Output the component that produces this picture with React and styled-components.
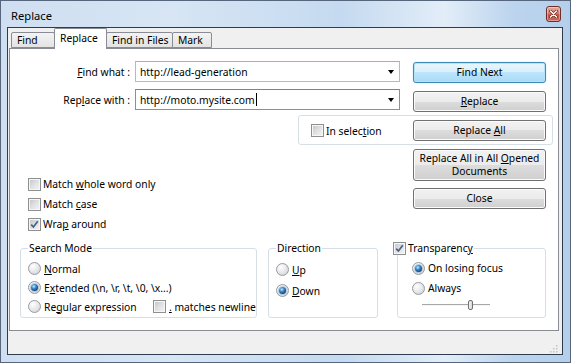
import React from 'react';
import styled, { createGlobalStyle, css } from 'styled-components';

const Global = createGlobalStyle`
  html, body { margin: 0; padding: 0; }
  body {
    width: 571px; height: 363px; overflow: hidden;
    font-family: "Noto Sans", "Open Sans", sans-serif;
    font-size: 10.3px; color: #000;
  }
  * { box-sizing: border-box; }
`;

const Window = styled.div`
  width: 571px; height: 363px;
  display: flex; flex-direction: column;
  border: 1px solid #56677d;
  background: linear-gradient(90deg, #cfdff1 0%, #d7e5f4 30%, #c5daf0 60%, #e2edf8 78%, #bcd4ee 90%, #b5cfeb 100%);
  padding: 0 7px 7px 6px;
`;

const TitleBar = styled.div`
  height: 26px; flex: none;
  display: flex; align-items: center; justify-content: space-between;
  padding: 2px 2px 0 4px;
`;

const Title = styled.span`
  font-size: 11.2px;
`;

const CloseBtn = styled.div`
  width: 15px; height: 16px; margin-top: -2px;
  border: 1px solid #6d3029; border-radius: 3px;
  background: linear-gradient(#e6aaa2 0%, #d27f74 45%, #c15444 55%, #c8685a 100%);
  box-shadow: inset 0 0 0 1px rgba(255,255,255,0.35);
  display: flex; align-items: center; justify-content: center;
`;

const Client = styled.div`
  flex: 1; display: flex; flex-direction: column;
  border: 1px solid #2f3c4d;
  background: #f0f0f0;
  padding: 0 3px 0 1px;
`;

const TabsRow = styled.div`
  height: 20px; flex: none;
  display: flex; align-items: flex-end;
  padding-left: 1px;
  position: relative; z-index: 1;
`;

const Tab = styled.div`
  width: ${p => p.$w}px;
  margin-left: -1px;
  height: ${p => (p.$active ? 21 : 16)}px;
  margin-bottom: ${p => (p.$active ? -1 : 0)}px;
  border: 1px solid #898c95;
  border-bottom: ${p => (p.$active ? 'none' : '1px solid #898c95')};
  border-radius: 2px 2px 0 0;
  background: ${p => (p.$active ? '#fff' : 'linear-gradient(#f3f3f3, #e3e3e3)')};
  padding: ${p => (p.$active ? '0 0 3px 5px' : '0 0 0 5px')};
  display: flex; align-items: center;
  white-space: nowrap;
  position: relative; z-index: ${p => (p.$active ? 2 : 0)};
  &:first-child { margin-left: 1px; }
`;

const Panel = styled.div`
  height: 283px; flex: none;
  border: 1px solid #898c95;
  background: #fff;
  padding: 12px 12px 0 0;
  display: flex; flex-direction: column;
`;

const FieldRow = styled.div`
  height: ${p => p.$h}px; flex: none;
  display: flex; align-items: flex-start;
`;

const Label = styled.label`
  width: 125px; height: 21px; flex: none;
  display: flex; align-items: center; justify-content: flex-end;
  padding-right: 5px;
  white-space: nowrap;
`;

const Combo = styled.div`
  width: 265px; height: 21px; flex: none;
  border: 1px solid ${p => (p.$focus ? '#8a9099' : '#b7bac1')};
  border-top-color: ${p => (p.$focus ? '#7d838c' : '#abadb3')};
  background: #fff;
  display: flex; align-items: center;
  padding: 0 5px 0 4px;
`;

const ComboText = styled.span`
  flex: 1; display: flex; align-items: center; white-space: pre;
`;

const Caret = styled.span`
  width: 1px; height: 13px; background: #000; margin-left: 1px;
`;

const Arrow = styled.span`
  width: 0; height: 0;
  border-left: 3.5px solid transparent;
  border-right: 3.5px solid transparent;
  border-top: 4px solid #000;
`;

const Button = styled.div`
  width: 133px; height: ${p => p.$h || 21}px; flex: none;
  margin-top: ${p => p.$mt || 0}px;
  margin-left: ${p => (p.$auto ? 'auto' : '0')};
  border: 1px solid #707070; border-radius: 3px;
  background: linear-gradient(#f2f2f2 0%, #ebebeb 50%, #dddddd 50%, #cfcfcf 100%);
  box-shadow: inset 0 0 0 1px #fbfbfb;
  display: flex; align-items: center; justify-content: center;
  text-align: center; line-height: 13px;
  ${p => p.$default && css`
    border-color: #3c8cb7;
    background: linear-gradient(#e9f6fd 0%, #d8effc 50%, #bde5fc 50%, #a9daf5 100%);
    box-shadow: inset 0 0 0 1px #b5e3f8, 0 0 1px #5fc2ec;
  `}
`;

const BtnText = styled.span`
  display: block;
`;

const SelectionRow = styled.div`
  display: flex; justify-content: flex-end;
  margin-right: -7px;
`;

const SelectionBox = styled.div`
  width: 255px; height: 30px;
  border: 1px solid #d5dfe5; border-radius: 3px;
  padding: 4px 6px 3px 12px;
  display: flex; align-items: center; justify-content: space-between;
`;

const Middle = styled.div`
  margin-top: 4px; height: 85px; flex: none;
  display: flex; padding-left: 18px;
`;

const CheckList = styled.div`
  margin-top: 25px;
  display: flex; flex-direction: column;
`;

const ButtonCol = styled.div`
  margin-left: auto;
  display: flex; flex-direction: column; gap: 7px;
`;

const CheckRow = styled.div`
  display: flex; align-items: center; gap: 2px;
  height: ${p => p.$h || 20}px;
  white-space: pre;
`;

const Box = styled.span`
  width: 13px; height: 13px; flex: none;
  border: 1px solid #8e8f8f;
  background: linear-gradient(135deg, #bfc3c9 0%, #e2e3e5 55%, #f4f4f4 100%);
  box-shadow: inset 0 0 0 1px #f6f6f6;
  display: flex; align-items: center; justify-content: center;
`;

const RadioCircle = styled.span`
  width: 13px; height: 13px; flex: none;
  border-radius: 50%;
  border: 1px solid #979aa0;
  background: radial-gradient(circle at 35% 30%, #ffffff 0%, #e9eaec 45%, #c9ccd1 100%);
  display: flex; align-items: center; justify-content: center;
`;

const RadioDot = styled.span`
  width: 7px; height: 7px; border-radius: 50%;
  background: radial-gradient(circle at 40% 35%, #c6ecff 0%, #3d8bcb 35%, #16457a 70%, #0b2746 100%);
  box-shadow: 0 0 0 1px rgba(120,170,210,0.5);
`;

const RadioRow = styled.div`
  display: flex; align-items: center; gap: 3px;
  height: ${p => p.$h}px;
  white-space: pre;
`;

const RadioLead = styled.div`
  display: flex; align-items: center; gap: 3px;
  width: ${p => p.$w}px;
`;

const GroupsRow = styled.div`
  margin-top: 7px;
  padding-left: 10px;
  display: flex; align-items: stretch;
`;

const Group = styled.fieldset`
  margin: 0 0 0 ${p => p.$ml || 0}px;
  width: ${p => p.$w}px;
  border: 1px solid #d5dfe5; border-radius: 3px;
  padding: ${p => p.$pt}px 0 1px ${p => p.$pl}px;
  min-width: 0;
`;

const Legend = styled.legend`
  padding: 0 1px;
  margin-left: ${p => p.$ml || 0}px;
  line-height: 14px; height: 14px;
  display: flex; align-items: center;
`;

const Slider = styled.div`
  display: flex; align-items: center;
  margin-left: 10px; height: 14px;
`;

const Track = styled.span`
  width: ${p => p.$w}px; height: 2px;
  border-top: 1px solid #a8a8a8; border-bottom: 1px solid #f4f4f4;
`;

const Thumb = styled.span`
  width: 5px; height: 10px;
  border: 1px solid #707070; border-radius: 2px;
  background: linear-gradient(90deg, #f4f4f4, #d8d8d8);
`;

const Footer = styled.div`
  flex: 1;
  display: flex; align-items: flex-end; justify-content: flex-end;
  padding: 0 1px 1px 0;
`;

const U = styled.u`
  text-decoration: underline;
  text-underline-offset: 1px;
`;

const Check = ({ checked }) => (
  <Box>
    {checked && (
      <svg width="9" height="9" viewBox="0 0 9 9">
        <path d="M1.2 4.6 L3.4 7 L7.8 1.2" fill="none" stroke="#4a5f86" strokeWidth="1.7" />
      </svg>
    )}
  </Box>
);

const Radio = ({ checked }) => <RadioCircle>{checked && <RadioDot />}</RadioCircle>;

export default function App() {
  return (
    <>
      <Global />
      <Window>
        <TitleBar>
          <Title>Replace</Title>
          <CloseBtn>
            <svg width="9" height="8" viewBox="0 0 9 8">
              <path d="M1.5 1 L7.5 7 M7.5 1 L1.5 7" stroke="#5a1e18" strokeWidth="2.6" strokeLinecap="round" />
              <path d="M1.5 1 L7.5 7 M7.5 1 L1.5 7" stroke="#fff" strokeWidth="1.5" strokeLinecap="round" />
            </svg>
          </CloseBtn>
        </TitleBar>
        <Client>
          <TabsRow>
            <Tab $w={44}>Find</Tab>
            <Tab $w={53} $active>Replace</Tab>
            <Tab $w={67}>Find in Files</Tab>
            <Tab $w={40}>Mark</Tab>
          </TabsRow>
          <Panel>
            <FieldRow $h={28}>
              <Label><span><U>F</U>ind what :</span></Label>
              <Combo>
                <ComboText>http://lead-generation</ComboText>
                <Arrow />
              </Combo>
              <Button $auto $mt={1} $default><BtnText>Find Next</BtnText></Button>
            </FieldRow>
            <FieldRow $h={26}>
              <Label><span>Rep<U>l</U>ace with :</span></Label>
              <Combo $focus>
                <ComboText>http://moto.mysite.com<Caret /></ComboText>
                <Arrow />
              </Combo>
              <Button $auto $mt={2}><BtnText><U>R</U>eplace</BtnText></Button>
            </FieldRow>
            <SelectionRow>
              <SelectionBox>
                <CheckRow $h={21}>
                  <Check />
                  <span>In selec<U>t</U>ion</span>
                </CheckRow>
                <Button><BtnText>Replace <U>A</U>ll</BtnText></Button>
              </SelectionBox>
            </SelectionRow>
            <Middle>
              <CheckList>
                <CheckRow><Check /><span>Match <U>w</U>hole word only</span></CheckRow>
                <CheckRow><Check /><span>Match <U>c</U>ase</span></CheckRow>
                <CheckRow><Check checked /><span>Wra<U>p</U> around</span></CheckRow>
              </CheckList>
              <ButtonCol>
                <Button $h={32}><BtnText>Replace All in All <U>O</U>pened<br />Documents</BtnText></Button>
                <Button><BtnText>Close</BtnText></Button>
              </ButtonCol>
            </Middle>
            <GroupsRow>
              <Group $w={237} $pl={7} $pt={4}>
                <Legend>Search Mode</Legend>
                <RadioRow $h={19}><Radio /><span><U>N</U>ormal</span></RadioRow>
                <RadioRow $h={19}><Radio checked /><span>E<U>x</U>tended (\n, \r, \t, \0, \x...)</span></RadioRow>
                <RadioRow $h={19}>
                  <RadioLead $w={122}><Radio /><span>Re<U>g</U>ular expression</span></RadioLead>
                  <Check />
                  <span><U>.</U> matches newline</span>
                </RadioRow>
              </Group>
              <Group $w={110} $ml={11} $pl={7} $pt={4}>
                <Legend>Direction</Legend>
                <RadioRow $h={21}><Radio /><span><U>U</U>p</span></RadioRow>
                <RadioRow $h={21}><Radio checked /><span><U>D</U>own</span></RadioRow>
              </Group>
              <Group $w={149} $ml={19} $pl={14} $pt={3}>
                <Legend $ml={-20}>
                  <CheckRow $h={14}><Check checked /><span>Transparenc<U>y</U></span></CheckRow>
                </Legend>
                <RadioRow $h={20}><Radio checked /><span>On losing focus</span></RadioRow>
                <RadioRow $h={20}><Radio /><span>Always</span></RadioRow>
                <Slider>
                  <Track $w={46} />
                  <Thumb />
                  <Track $w={17} />
                </Slider>
              </Group>
            </GroupsRow>
          </Panel>
          <Footer>
            <svg width="8" height="8" viewBox="0 0 8 8">
              <g fill="#c4c4c4">
                <rect x="6" y="0" width="1.5" height="1.5" />
                <rect x="3" y="3" width="1.5" height="1.5" />
                <rect x="6" y="3" width="1.5" height="1.5" />
                <rect x="0" y="6" width="1.5" height="1.5" />
                <rect x="3" y="6" width="1.5" height="1.5" />
                <rect x="6" y="6" width="1.5" height="1.5" />
              </g>
            </svg>
          </Footer>
        </Client>
      </Window>
    </>
  );
}
